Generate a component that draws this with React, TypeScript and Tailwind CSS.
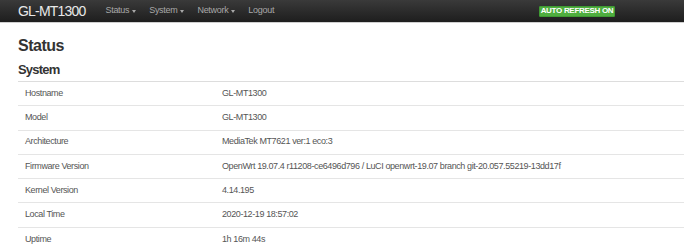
import React from "react";

const rows: [string, string][] = [
  ["Hostname", "GL-MT1300"],
  ["Model", "GL-MT1300"],
  ["Architecture", "MediaTek MT7621 ver:1 eco:3"],
  ["Firmware Version", "OpenWrt 19.07.4 r11208-ce6496d796 / LuCI openwrt-19.07 branch git-20.057.55219-13dd17f"],
  ["Kernel Version", "4.14.195"],
  ["Local Time", "2020-12-19 18:57:02"],
  ["Uptime", "1h 16m 44s"],
];

const menu = ["Status", "System", "Network"];

export default function App() {
  return (
    <div className="w-[684px] h-[248px] overflow-hidden bg-white font-['Liberation_Sans',Arial,sans-serif]">
      <header className="h-[23px] flex items-center bg-gradient-to-b from-[#3a3a3a] to-[#1e1e1e] border-b border-[#cfcfcf] pl-[18px] pr-[69px]">
        <span className="text-[14px] leading-none tracking-[-0.8px] text-[#e8e8e8] mr-[20px]">GL-MT1300</span>
        <nav className="flex items-center gap-[13px] text-[9px] tracking-[-0.3px] text-[#a8a8a8]">
          {menu.map((m) => (
            <span key={m} className="flex items-center gap-[3px]">
              {m}
              <span className="inline-block w-0 h-0 border-l-[2.5px] border-r-[2.5px] border-t-[3px] border-l-transparent border-r-transparent border-t-[#a8a8a8]" />
            </span>
          ))}
          <span>Logout</span>
        </nav>
        <span className="ml-auto h-[11px] w-[76px] flex items-center justify-center bg-[#4fae3f] border border-[#3f9a33] rounded-[1px] text-[8px] font-bold text-white leading-none tracking-[-0.3px]">
          AUTO REFRESH ON
        </span>
      </header>

      <main className="pl-[18px] pt-[13px]">
        <h1 className="text-[16px] leading-[20px] font-bold tracking-[-0.5px] text-[#333]">Status</h1>
        <h2 className="mt-[6px] text-[13px] leading-[16px] font-bold tracking-[-0.8px] text-[#333]">System</h2>
        <div className="mt-[3px] border-t border-[#ddd] text-[9px] tracking-[-0.4px] text-[#555]">
          {rows.map(([k, v]) => (
            <div key={k} className="grid grid-cols-[204px_1fr] h-[24.3px] items-center border-b border-[#e5e5e5]">
              <span className="pl-[7px]">{k}</span>
              <span className="whitespace-nowrap">{v}</span>
            </div>
          ))}
        </div>
      </main>
    </div>
  );
}
